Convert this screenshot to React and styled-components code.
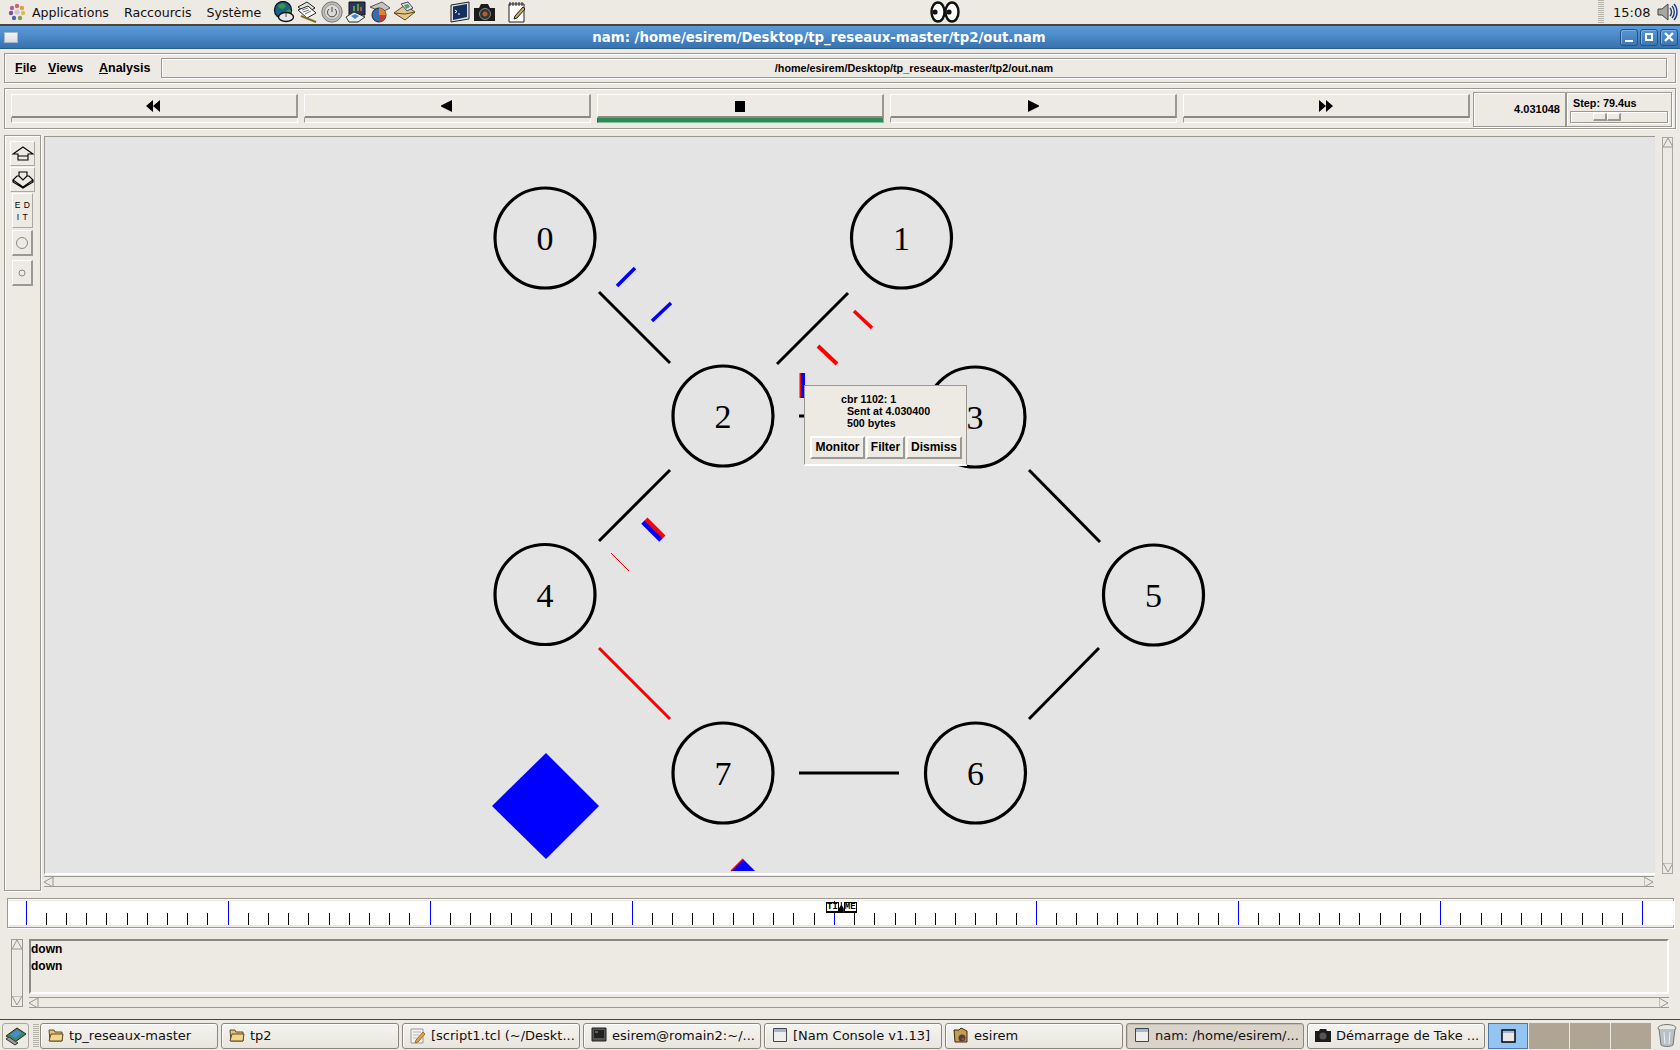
import styled, { createGlobalStyle, css } from "styled-components";

const GlobalStyle = createGlobalStyle`
    html, body {
        margin: 0;
        padding: 0;
        background: #ede9e3;
    }
    * {
        box-sizing: border-box;
    }
`;

const groove = css`
    border: 1px solid #9a9892;
    box-shadow: inset 1px 1px 0 #fff, 1px 1px 0 #fff;
`;

const raised = css`
    background: #ede9e3;
    border-top: 1px solid #fff;
    border-left: 1px solid #fff;
    border-right: 2px solid #9a9892;
    border-bottom: 2px solid #9a9892;
`;

const sans = `"DejaVu Sans", sans-serif`;
const tk = `"Liberation Sans", Arial, sans-serif`;

const NODES = [
    { id: 0, x: 545, y: 238 },
    { id: 1, x: 901.5, y: 238 },
    { id: 2, x: 723, y: 416 },
    { id: 3, x: 975, y: 417 },
    { id: 4, x: 545, y: 594.5 },
    { id: 5, x: 1153.5, y: 595 },
    { id: 6, x: 975.5, y: 773 },
    { id: 7, x: 723, y: 773 },
];

const LINKS = [
    { a: [599, 292], b: [670, 363] },
    { a: [848, 293], b: [777, 364] },
    { a: [670, 470], b: [599, 541] },
    { a: [799, 416], b: [812, 416] },
    { a: [1029, 470], b: [1100, 542] },
    { a: [1099, 648], b: [1029, 719] },
    { a: [799, 773], b: [899, 773] },
    { a: [599, 648], b: [670, 719], color: "#f00" },
];

const PACKETS = [
    { a: [617, 286], b: [635, 268], color: "#00f", w: 3.5 },
    { a: [652, 321], b: [671, 303], color: "#00f", w: 3.5 },
    { a: [854, 311], b: [872, 328], color: "#f00", w: 3.5 },
    { a: [818, 346], b: [837, 364], color: "#f00", w: 4 },
    { a: [643, 522], b: [661, 540], color: "#00f", w: 5 },
    { a: [646, 519], b: [664, 537], color: "#f00", w: 4 },
    { a: [611, 553], b: [629, 571], color: "#f00", w: 1 },
    { a: [800.5, 373], b: [800.5, 398], color: "#f00", w: 2 },
    { a: [803, 373], b: [803, 398], color: "#00f", w: 4 },
];

const TASKS = [
    { label: "tp_reseaux-master", icon: "folder" },
    { label: "tp2", icon: "folder" },
    { label: "[script1.tcl (~/Deskt...", icon: "note" },
    { label: "esirem@romain2:~/...", icon: "term" },
    { label: "[Nam Console v1.13]", icon: "win" },
    { label: "esirem", icon: "home" },
    { label: "nam: /home/esirem/...", icon: "win", active: true },
    { label: "Démarrage de Take ...", icon: "camera" },
];

const TICKS = Array.from({ length: 81 }, (_, i) => i);

const Arrow = ({ kind }) => (
    <svg width="16" height="12" viewBox="0 0 16 12">
        {kind === "rew" && <path d="M7 0v12L0 6zM14 0v12L7 6z" fill="#000" />}
        {kind === "back" && <path d="M13 0v12L2 6.5V5.5z" fill="#000" />}
        {kind === "stop" && <path d="M3 1h10v11H3z" fill="#000" />}
        {kind === "play" && <path d="M3 0v12L14 6.5V5.5z" fill="#000" />}
        {kind === "ff" && <path d="M1 0v12L8 6zM8 0v12L15 6z" fill="#000" />}
    </svg>
);

const Gnome = () => (
    <svg width="18" height="18" viewBox="0 0 18 18">
        <circle cx="9" cy="3" r="2.2" fill="#c66" />
        <circle cx="14" cy="5" r="2.2" fill="#e0a040" />
        <circle cx="15" cy="10" r="2.2" fill="#d8c050" />
        <circle cx="12" cy="15" r="2.2" fill="#80a050" />
        <circle cx="6" cy="15" r="2.2" fill="#5a60b0" />
        <circle cx="3" cy="10" r="2.2" fill="#7a50a0" />
        <circle cx="4" cy="5" r="2.2" fill="#b060a0" />
        <circle cx="9" cy="9" r="2.6" fill="#d0c8d0" />
    </svg>
);

const PanelIcon = ({ kind }) => {
    if (kind === "globe") return (
        <svg width="22" height="22" viewBox="0 0 22 22">
            <circle cx="10" cy="9" r="8.5" fill="#17648a" stroke="#0c1c28" strokeWidth="1.4" />
            <path d="M5 4l5-2 3 3-3 3-4-1zM13 10l4-2 1 3-4 3z" fill="#3a9a3a" />
            <ellipse cx="13" cy="16" rx="7.5" ry="4.5" fill="#e8e8e8" stroke="#111" strokeWidth="1.4" />
            <path d="M13 12v4" stroke="#555" />
        </svg>
    );
    if (kind === "papers") return (
        <svg width="22" height="22" viewBox="0 0 22 22">
            <path d="M1 6l9-5 8 6-9 5z" fill="#e4e4e4" stroke="#222" />
            <path d="M1 9l10-4 8 7-9 5z" fill="#fff" stroke="#222" />
            <path d="M5 9l6-2M6 11l6-2M8 13l6-3" stroke="#777" />
            <path d="M4 15l15 6" stroke="#b08a30" strokeWidth="2.4" />
            <path d="M4 15l15 6" stroke="#333" strokeWidth="0.6" />
        </svg>
    );
    if (kind === "power") return (
        <svg width="22" height="22" viewBox="0 0 22 22">
            <circle cx="11" cy="11" r="10.2" fill="#bdbbb7" stroke="#777" />
            <circle cx="11" cy="11" r="7.5" fill="#dcdad6" stroke="#999" />
            <path d="M8 8a4.5 4.5 0 1 0 6 0M11 6v5" fill="none" stroke="#444" />
        </svg>
    );
    if (kind === "chart") return (
        <svg width="22" height="22" viewBox="0 0 22 22">
            <path d="M4 1h16v13H4z" fill="#2a3560" stroke="#111" />
            <path d="M8 10V5h2v5zM12 10V3h2v7z" fill="#50a050" />
            <path d="M15 10V6h2v4z" fill="#c05040" />
            <path d="M1 16l8-5 11 5-7 5H4z" fill="#eee" stroke="#333" />
            <path d="M6 15l4-2 4 2-4 3z" fill="#3a8ad8" />
        </svg>
    );
    if (kind === "pie") return (
        <svg width="22" height="22" viewBox="0 0 22 22">
            <path d="M1 6l12-5 8 6-8 4z" fill="#c4c4c4" stroke="#555" />
            <circle cx="10" cy="14" r="7" fill="#3a6ab0" stroke="#222" />
            <path d="M10 14V7a7 7 0 0 1 7 7z" fill="#e08030" />
            <path d="M10 14h7a7 7 0 0 1-7 7z" fill="#c04030" />
        </svg>
    );
    if (kind === "mail") return (
        <svg width="23" height="22" viewBox="0 0 23 22">
            <path d="M1 12l11-8 10 7-10 8z" fill="#e2c68c" stroke="#5a4a20" />
            <path d="M8 3l7-2 5 6-6 3z" fill="#dfe8df" stroke="#446" />
            <path d="M11 4l4-1 2 3-4 2z" fill="#5a9a70" />
            <path d="M1 12l11 1 10-2" fill="none" stroke="#5a4a20" />
        </svg>
    );
    if (kind === "term") return (
        <svg width="21" height="22" viewBox="0 0 21 22">
            <path d="M1 4l18-3v17L1 21z" fill="#ddd" stroke="#222" />
            <path d="M3 5.5l14-2.5v13L3 19z" fill="#14305e" />
            <path d="M5 9l2 1.5L5 12M8 13h2" stroke="#fff" fill="none" />
        </svg>
    );
    if (kind === "camera") return (
        <svg width="23" height="20" viewBox="0 0 23 20">
            <path d="M1 6h5l2-4h7l2 4h5v13H1z" fill="#1c1c1c" />
            <circle cx="12" cy="12" r="5.5" fill="#333" stroke="#888" />
            <circle cx="12" cy="12" r="2.5" fill="#b06030" />
        </svg>
    );
    if (kind === "note") return (
        <svg width="20" height="22" viewBox="0 0 20 22">
            <path d="M2 3h15v18H2z" fill="#fff" stroke="#222" />
            <path d="M3 1v4M6 1v4M9 1v4M12 1v4M15 1v4" stroke="#222" />
            <path d="M8 15l8-9 2 2-8 9-3 1z" fill="#c8a850" stroke="#222" />
        </svg>
    );
    return null;
};

const Eyes = () => (
    <svg width="30" height="22" viewBox="0 0 30 22">
        <ellipse cx="8" cy="11" rx="6.5" ry="9.5" fill="#fff" stroke="#111" strokeWidth="2.4" />
        <ellipse cx="22" cy="11" rx="6.5" ry="9.5" fill="#fff" stroke="#111" strokeWidth="2.4" />
        <circle cx="5" cy="11" r="2.6" fill="#111" />
        <circle cx="19" cy="11" r="2.6" fill="#111" />
    </svg>
);

const Speaker = () => (
    <svg width="22" height="20" viewBox="0 0 22 20">
        <path d="M1 7h4l6-5v16l-6-5H1z" fill="#a8a6a0" stroke="#444" />
        <path d="M13 6c2 2 2 6 0 8M15 4c3 3 3 9 0 12M17 2c4 4 4 12 0 16" fill="none" stroke="#1c3f80" strokeWidth="1.4" />
    </svg>
);

const TaskIcon = ({ kind }) => {
    if (kind === "folder") return (
        <svg width="16" height="16" viewBox="0 0 16 16">
            <path d="M1 3h5l1 2h7v9H2z" fill="#e8c070" stroke="#5a4a2a" />
            <path d="M1 14l2-7h12l-1 7z" fill="#f2d48c" stroke="#5a4a2a" />
        </svg>
    );
    if (kind === "note") return (
        <svg width="16" height="17" viewBox="0 0 16 17">
            <path d="M1 2h12v14H1z" fill="#f4f2ee" stroke="#999" />
            <path d="M3 5h8M3 8h6M3 11h4" stroke="#bbb" />
            <path d="M6 13l7-8 2 2-7 8-3 1z" fill="#e0a050" stroke="#a07030" />
        </svg>
    );
    if (kind === "term") return (
        <svg width="16" height="16" viewBox="0 0 16 16">
            <path d="M1 1h14v13H1z" fill="#555" stroke="#222" />
            <path d="M3 3h10v8H3z" fill="#222" />
            <path d="M4 5h3" stroke="#8a8" />
        </svg>
    );
    if (kind === "win") return (
        <svg width="16" height="16" viewBox="0 0 16 16">
            <path d="M1.5 1.5h13v13h-13z" fill="#f0eeea" stroke="#444" />
            <path d="M2 2h12v3H2z" fill="#9db8d8" />
        </svg>
    );
    if (kind === "home") return (
        <svg width="16" height="17" viewBox="0 0 16 17">
            <path d="M1 3h5l2-2 6 3v11H2z" fill="#c89a50" stroke="#3a2a10" />
            <circle cx="9" cy="11" r="3.5" fill="#444" />
            <circle cx="10" cy="12" r="1.5" fill="#c04030" />
        </svg>
    );
    return (
        <svg width="16" height="14" viewBox="0 0 16 14">
            <path d="M0 3h4l1-2h6l1 2h4v11H0z" fill="#1c1c1c" />
            <circle cx="8" cy="8" r="3.5" fill="#555" />
        </svg>
    );
};

const Node = ({ id, x, y }) => (
    <g>
        <circle cx={x} cy={y} r="50" fill="none" stroke="#000" strokeWidth="3.2" />
        <NodeLabel x={x} y={y + 12}>{id}</NodeLabel>
    </g>
);

const ScrollArrow = ({ dir }) => {
    const points = {
        up: "0,9 5,0 10,9",
        down: "0,0 5,9 10,0",
        left: "9,0 0,5 9,10",
        right: "0,0 9,5 0,10",
    };
    return (
        <svg width="10" height="10" viewBox="0 0 10 10">
            <polygon points={points[dir]} fill="#ede9e3" stroke="#9a9892" />
        </svg>
    );
};

const App = () => {
    return <>
        <GlobalStyle />
        <Page>
            <TopPanel>
                <PanelLogo><Gnome /></PanelLogo>
                <PanelMenu>
                    <PanelMenuItem>Applications</PanelMenuItem>
                    <PanelMenuItem>Raccourcis</PanelMenuItem>
                    <PanelMenuItem>Système</PanelMenuItem>
                </PanelMenu>
                <Launchers>
                    {["globe", "papers", "power", "chart", "pie", "mail"].map(k => <PanelIcon key={k} kind={k} />)}
                </Launchers>
                <Launchers $wide>
                    <PanelIcon kind="term" />
                    <PanelIcon kind="camera" />
                    <NoteSlot><PanelIcon kind="note" /></NoteSlot>
                </Launchers>
                <EyesSlot><Eyes /></EyesSlot>
                <PanelHandle />
                <Clock>15:08</Clock>
                <SpeakerSlot><Speaker /></SpeakerSlot>
            </TopPanel>

            <TitleBar>
                <WindowMenuIcon />
                <TitleText>nam: /home/esirem/Desktop/tp_reseaux-master/tp2/out.nam</TitleText>
                <WindowButtons>
                    <WindowButton><svg width="12" height="12" viewBox="0 0 12 12"><path d="M2 9h8v2H2z" fill="#fff" /></svg></WindowButton>
                    <WindowButton><svg width="12" height="12" viewBox="0 0 12 12"><path d="M3 3h6v6H3z" fill="none" stroke="#fff" strokeWidth="2" /></svg></WindowButton>
                    <WindowButton><svg width="12" height="12" viewBox="0 0 12 12"><path d="M2 2l8 8M10 2l-8 8" stroke="#fff" strokeWidth="2.4" /></svg></WindowButton>
                </WindowButtons>
            </TitleBar>

            <MenuFrame>
                <MenuItem $w={33}><u>F</u>ile</MenuItem>
                <MenuItem $w={51}><u>V</u>iews</MenuItem>
                <MenuItem $w={62}><u>A</u>nalysis</MenuItem>
                <FileEntry>/home/esirem/Desktop/tp_reseaux-master/tp2/out.nam</FileEntry>
            </MenuFrame>

            <ToolbarFrame>
                <Transport>
                    {["rew", "back", "stop", "play", "ff"].map(k => (
                        <TransportCell key={k}>
                            <TransportFace><Arrow kind={k} /></TransportFace>
                            <TransportStrip $active={k === "stop"} />
                        </TransportCell>
                    ))}
                </Transport>
                <TimeBox>4.031048</TimeBox>
                <StepBox>
                    <StepLabel>Step: 79.4us</StepLabel>
                    <StepTrough><StepThumb /><StepThumb /></StepTrough>
                </StepBox>
            </ToolbarFrame>

            <Workspace>
                <SidePanel>
                    <ToolWide>
                        <svg width="22" height="18" viewBox="0 0 22 18">
                            <path d="M11 2L21 9h-5v6H6V9H1zM6 11h10" fill="none" stroke="#000" strokeWidth="1.1" />
                        </svg>
                    </ToolWide>
                    <ToolWide>
                        <svg width="22" height="18" viewBox="0 0 22 18">
                            <path d="M7 1h8v4h2l4 4-10 7L1 9l4-4h2zM1 9v2l10 6 10-6V9M7 5l4 4 4-4" fill="none" stroke="#000" strokeWidth="1.1" />
                        </svg>
                    </ToolWide>
                    <EditButton>E D<br />I T</EditButton>
                    <ToolRaised><svg width="14" height="14" viewBox="0 0 14 14"><circle cx="7" cy="7" r="5.5" fill="none" stroke="#8a8882" /></svg></ToolRaised>
                    <ToolRaised><svg width="8" height="8" viewBox="0 0 8 8"><circle cx="4" cy="4" r="3" fill="none" stroke="#8a8882" /></svg></ToolRaised>
                </SidePanel>
                <CanvasColumn>
                    <CanvasRow>
                        <CanvasFrame>
                            <NetworkSvg viewBox="45 137 1610 736">
                                {LINKS.map((l, i) => <line key={i} x1={l.a[0]} y1={l.a[1]} x2={l.b[0]} y2={l.b[1]} stroke={l.color || "#000"} strokeWidth="3" />)}
                                {PACKETS.map((p, i) => <line key={i} x1={p.a[0]} y1={p.a[1]} x2={p.b[0]} y2={p.b[1]} stroke={p.color} strokeWidth={p.w} />)}
                                {NODES.map(n => <Node key={n.id} {...n} />)}
                                <polygon points="546,753 599,806 546,859 492,806" fill="#00f" />
                                <polygon points="743,859 755,871 731,871" fill="#00f" />
                                <line x1="731" y1="871" x2="743" y2="859" stroke="#f00" strokeWidth="1.4" />
                            </NetworkSvg>
                            <PacketPopup>
                                <PopupText>{`cbr 1102: 1\n  Sent at 4.030400\n  500 bytes`}</PopupText>
                                <PopupButtons>
                                    <PopupButton $w={55}>Monitor</PopupButton>
                                    <PopupButton $w={39}>Filter</PopupButton>
                                    <PopupButton $w={56}>Dismiss</PopupButton>
                                </PopupButtons>
                            </PacketPopup>
                        </CanvasFrame>
                        <VScroll>
                            <ScrollArrow dir="up" />
                            <ScrollArrow dir="down" />
                        </VScroll>
                    </CanvasRow>
                    <HScroll>
                        <ScrollArrow dir="left" />
                        <ScrollArrow dir="right" />
                    </HScroll>
                </CanvasColumn>
            </Workspace>

            <TimelineFrame>
                <svg width="1665" height="24" viewBox="9 901 1665 24">
                    {TICKS.map(i => {
                        const x = Math.round(25.5 + i * 20.21) + 0.5;
                        const major = i % 10 === 0;
                        return <line key={i} x1={x} x2={x} y1={major ? 901 : 913} y2="925" stroke={major ? "#00f" : "#000"} />;
                    })}
                </svg>
                <TimeMarker>
                    <TimeLetters>TI</TimeLetters>
                    <TimeThumb />
                    <TimeLetters>ME</TimeLetters>
                </TimeMarker>
            </TimelineFrame>

            <LogRow>
                <LogScroll>
                    <ScrollArrow dir="up" />
                    <ScrollArrow dir="down" />
                </LogScroll>
                <LogColumn>
                    <LogBox>down<br />down</LogBox>
                    <LogHScroll>
                        <ScrollArrow dir="left" />
                        <ScrollArrow dir="right" />
                    </LogHScroll>
                </LogColumn>
            </LogRow>

            <Taskbar>
                <ShowDesktop>
                    <svg width="24" height="22" viewBox="0 0 24 22">
                        <path d="M2 11l11-8 9 6-11 8z" fill="#3a8a60" stroke="#222" />
                        <path d="M6 10l7-5 5 3-7 5z" fill="#4a8ad0" />
                        <path d="M2 14l9 6 3-2-9-6z" fill="#999" stroke="#333" />
                    </svg>
                </ShowDesktop>
                <TaskHandle />
                <TaskList>
                    {TASKS.map(t => (
                        <TaskButton key={t.label} $active={t.active}>
                            <TaskIcon kind={t.icon} />
                            <TaskLabel>{t.label}</TaskLabel>
                        </TaskButton>
                    ))}
                </TaskList>
                <Pager>
                    <PagerCell $active><svg width="15" height="14" viewBox="0 0 15 14"><path d="M1 1h13v12H1z" fill="#e8e8e8" stroke="#000" strokeWidth="1.5" /><path d="M2 2h11v2H2z" fill="#9db8d8" /></svg></PagerCell>
                    <PagerCell />
                    <PagerCell />
                    <PagerCell />
                </Pager>
                <TrashSlot>
                    <svg width="20" height="24" viewBox="0 0 20 24">
                        <ellipse cx="10" cy="5" rx="9" ry="3.5" fill="#e8e8e4" stroke="#777" />
                        <path d="M2 6l2 16c3 2 9 2 12 0l2-16" fill="#b8c2c4" stroke="#777" />
                        <path d="M7 9l1 12M13 9l-1 12" stroke="#eef" />
                    </svg>
                </TrashSlot>
            </Taskbar>
        </Page>
    </>;
}

export default App;

const Page = styled.div`
    width: 1680px;
    height: 1050px;
    overflow: hidden;
    background: #ede9e3;
    display: flex;
    flex-direction: column;
    font-family: ${tk};
    position: relative;
`

const TopPanel = styled.div`
    height: 26px;
    flex: none;
    display: flex;
    align-items: center;
    background: #ede9e3;
    border-bottom: 2px solid #4a463c;
`

const PanelLogo = styled.div`
    width: 32px;
    flex: none;
    padding-left: 8px;
    display: flex;
`

const PanelMenu = styled.div`
    display: flex;
    width: 241px;
    flex: none;
    gap: 15px;
`

const PanelMenuItem = styled.span`
    font: 12.6px ${sans};
    color: #111;
`

const Launchers = styled.div`
    display: flex;
    align-items: center;
    gap: 2px;
    width: ${p => p.$wide ? "471px" : "177px"};
    flex: none;
`

const NoteSlot = styled.div`
    margin-left: 9px;
    display: flex;
`

const EyesSlot = styled.div`
    width: 30px;
    display: flex;
    flex: none;
    margin-left: 9px;
`

const PanelHandle = styled.div`
    width: 6px;
    height: 24px;
    flex: none;
    margin-left: 638px;
    background: repeating-linear-gradient(to bottom, #b5b2aa 0 1px, #ede9e3 1px 2px);
`

const Clock = styled.span`
    font: 13px ${sans};
    color: #111;
    margin-left: 9px;
    width: 44px;
    flex: none;
`

const SpeakerSlot = styled.div`
    display: flex;
    flex: none;
`

const TitleBar = styled.div`
    height: 23px;
    flex: none;
    display: flex;
    align-items: center;
    position: relative;
    padding: 0 2px 0 4px;
    background: linear-gradient(to bottom, #5b9cdc, #3872ad);
    border-bottom: 1px solid #2c5a8c;
`

const WindowMenuIcon = styled.div`
    width: 14px;
    height: 11px;
    background: linear-gradient(to bottom, #f4f4f4, #dcdcdc);
    border: 1px solid #9fb8d0;
`

const TitleText = styled.div`
    position: absolute;
    left: 0;
    right: 42px;
    text-align: center;
    font: bold 13.3px ${sans};
    color: #fff;
`

const WindowButtons = styled.div`
    display: flex;
    gap: 2px;
    margin-left: auto;
`

const WindowButton = styled.div`
    width: 18px;
    height: 17px;
    border: 1px solid #24517f;
    border-radius: 3px;
    box-shadow: inset 1px 1px 0 #7fb0e0;
    display: flex;
    align-items: center;
    justify-content: center;
`

const MenuFrame = styled.div`
    ${groove};
    margin: 4px 4px 0;
    height: 30px;
    flex: none;
    display: flex;
    align-items: center;
    padding: 0 8px 0 10px;
`

const MenuItem = styled.span`
    font: bold 12.5px ${tk};
    color: #000;
    width: ${p => p.$w}px;
    flex: none;
`

const FileEntry = styled.div`
    ${groove};
    flex: 1;
    height: 20px;
    text-align: center;
    font: bold 10.8px/18px ${tk};
    color: #000;
`

const ToolbarFrame = styled.div`
    ${groove};
    margin: 5px 4px 0;
    height: 41px;
    flex: none;
    display: flex;
    align-items: flex-start;
    padding: 3px 3px 0 6px;
`

const Transport = styled.div`
    display: grid;
    grid-template-columns: repeat(5, 287px);
    gap: 6px;
    margin-top: 2px;
    width: 1459px;
    flex: none;
`

const TransportCell = styled.div`
    display: flex;
    flex-direction: column;
    height: 29px;
`

const TransportFace = styled.div`
    height: 24px;
    flex: none;
    background: #ede9e3;
    border-top: 1px solid #fff;
    border-left: 1px solid #fff;
    border-right: 2px solid #9a9892;
    border-bottom: 2px solid #8a8882;
    display: flex;
    align-items: center;
    justify-content: center;
`

const TransportStrip = styled.div`
    height: 5px;
    flex: none;
    border-left: 1px solid ${p => p.$active ? "#555" : "#9a9892"};
    border-bottom: 1px solid ${p => p.$active ? "#7fbf9a" : "#fff"};
    border-right: 1px solid ${p => p.$active ? "#7fbf9a" : "#fff"};
    background: ${p => p.$active ? "#2e8b57" : "transparent"};
`

const TimeBox = styled.div`
    ${groove};
    width: 93px;
    height: 35px;
    flex: none;
    margin-left: 3px;
    text-align: right;
    padding-right: 5px;
    font: bold 11px/33px ${tk};
    color: #000;
`

const StepBox = styled.div`
    ${groove};
    width: 106px;
    height: 35px;
    flex: none;
    padding: 4px 3px 0 3px;
    display: flex;
    flex-direction: column;
`

const StepLabel = styled.div`
    font: bold 10.8px/13px ${tk};
    color: #000;
    padding-left: 3px;
`

const StepTrough = styled.div`
    ${groove};
    height: 12px;
    margin-top: 1px;
    display: flex;
    padding: 1px 0 0 22px;
`

const StepThumb = styled.div`
    ${raised};
    width: 14px;
    height: 8px;
`

const Workspace = styled.div`
    display: flex;
    margin: 6px 0 0 4px;
    height: 756px;
    flex: none;
`

const SidePanel = styled.div`
    ${groove};
    width: 37px;
    height: 756px;
    flex: none;
    display: flex;
    flex-direction: column;
    align-items: center;
    padding-top: 5px;
`

const ToolWide = styled.div`
    width: 25px;
    height: 25px;
    flex: none;
    margin-bottom: 1px;
    background: #ede9e3;
    border: 1px solid #fff;
    border-right-color: #aaa8a2;
    border-bottom-color: #aaa8a2;
    display: flex;
    align-items: center;
    justify-content: center;
`

const EditButton = styled.div`
    width: 21px;
    height: 35px;
    flex: none;
    margin-bottom: 2px;
    border: 1px solid #fff;
    border-right-color: #aaa8a2;
    border-bottom-color: #aaa8a2;
    text-align: center;
    font: 8.5px/12px ${tk};
    letter-spacing: 0.5px;
    color: #000;
    padding-top: 5px;
`

const ToolRaised = styled.div`
    ${raised};
    width: 21px;
    height: 26px;
    flex: none;
    margin-bottom: 4px;
    display: flex;
    align-items: center;
    justify-content: center;
`

const CanvasColumn = styled.div`
    width: 1631px;
    flex: none;
    margin-left: 3px;
    display: flex;
    flex-direction: column;
`

const CanvasRow = styled.div`
    display: flex;
    height: 740px;
    flex: none;
`

const CanvasFrame = styled.div`
    width: 1611px;
    height: 739px;
    margin-top: 1px;
    flex: none;
    position: relative;
    background: #e4e4e4;
    border-top: 1px solid #9a9892;
    border-left: 1px solid #9a9892;
    border-bottom: 2px solid #fff;
`

const NetworkSvg = styled.svg`
    display: block;
    width: 1610px;
    height: 736px;
`

const NodeLabel = styled.text`
    font: 34px "Liberation Serif", serif;
    text-anchor: middle;
    fill: #000;
`

const PacketPopup = styled.div`
    position: absolute;
    left: 759px;
    top: 248px;
    width: 163px;
    height: 80px;
    background: #ede9e3;
    border: 1px solid #fff;
    border-top-color: #9a9892;
    border-left-color: #9a9892;
    border-right-color: #9a9892;
    box-shadow: 0 1px 0 #fff;
`

const PopupText = styled.pre`
    margin: 7px 0 0 36px;
    font: bold 10.7px/12px ${tk};
    color: #000;
`

const PopupButtons = styled.div`
    display: flex;
    gap: 1px;
    margin: 7px 0 0 5px;
`

const PopupButton = styled.div`
    ${raised};
    border-top-width: 2px;
    border-left-width: 2px;
    width: ${p => p.$w}px;
    height: 23px;
    flex: none;
    text-align: center;
    font: bold 12px/18px ${tk};
    color: #000;
`

const VScroll = styled.div`
    width: 11px;
    flex: none;
    margin: 2px 0 0 7px;
    height: 737px;
    border: 1px solid #aaa8a2;
    display: flex;
    flex-direction: column;
    justify-content: space-between;
    align-items: center;
`

const HScroll = styled.div`
    width: 1610px;
    height: 11px;
    margin-top: 1px;
    border-top: 1px solid #9a9892;
    border-bottom: 1px solid #9a9892;
    display: flex;
    justify-content: space-between;
    align-items: center;
    flex: none;
`

const TimelineFrame = styled.div`
    ${groove};
    position: relative;
    margin: 7px 6px 0 7px;
    height: 30px;
    flex: none;
    padding: 2px 0 0 1px;
    background: #ede9e3;
    svg {
        display: block;
        background: #fff;
    }
`

const TimeMarker = styled.div`
    position: absolute;
    left: 818px;
    top: 3px;
    width: 30px;
    height: 11px;
    display: flex;
`

const TimeLetters = styled.span`
    flex: 1;
    background: #fff;
    border: 1px solid #000;
    border-bottom-width: 2px;
    font: bold 9px/8px "Liberation Mono", monospace;
    text-align: center;
    color: #000;
`

const TimeThumb = styled.span`
    width: 5px;
    flex: none;
    height: 11px;
    background: #000;
    clip-path: polygon(40% 0, 60% 0, 60% 30%, 100% 60%, 100% 100%, 0 100%, 0 60%, 40% 30%);
`

const LogRow = styled.div`
    display: flex;
    margin: 11px 11px 0 11px;
    height: 68px;
    flex: none;
    gap: 6px;
`

const LogScroll = styled.div`
    width: 12px;
    height: 68px;
    flex: none;
    border: 1px solid #9a9892;
    display: flex;
    flex-direction: column;
    justify-content: space-between;
    align-items: center;
`

const LogColumn = styled.div`
    flex: 1;
    display: flex;
    flex-direction: column;
    min-width: 0;
`

const LogBox = styled.div`
    height: 55px;
    flex: none;
    border-top: 2px solid #8a8882;
    border-left: 2px solid #8a8882;
    border-right: 2px solid #fff;
    border-bottom: 2px solid #fff;
    font: bold 12px/17px ${tk};
    color: #000;
`

const LogHScroll = styled.div`
    height: 11px;
    margin-top: 3px;
    flex: none;
    border-top: 1px solid #9a9892;
    border-bottom: 1px solid #9a9892;
    display: flex;
    justify-content: space-between;
    align-items: center;
`

const Taskbar = styled.div`
    margin-top: auto;
    height: 31px;
    flex: none;
    display: flex;
    align-items: flex-start;
    border-top: 1px solid #4a463c;
    padding: 3px 0 0 2px;
    background: #ede9e3;
`

const ShowDesktop = styled.div`
    width: 27px;
    height: 26px;
    flex: none;
    border: 1px solid #a9a69c;
    border-radius: 3px;
    display: flex;
    align-items: center;
    justify-content: center;
`

const TaskHandle = styled.div`
    width: 6px;
    height: 24px;
    flex: none;
    margin: 1px 1px 0 4px;
    background: repeating-linear-gradient(to bottom, #b5b2aa 0 1px, #ede9e3 1px 2px);
`

const TaskList = styled.div`
    display: grid;
    grid-template-columns: repeat(8, 178px);
    gap: 3px;
    flex: none;
    width: 1445px;
`

const TaskButton = styled.div`
    height: 26px;
    display: flex;
    align-items: center;
    gap: 5px;
    padding: 0 0 2px 7px;
    border: 1px solid #8a867c;
    border-radius: 3px;
    background: ${p => p.$active ? "#d9d3c9" : "linear-gradient(to bottom, #f6f4f0, #e8e5de)"};
    box-shadow: inset 1px 1px 0 ${p => p.$active ? "#c4beb2" : "#fff"};
`

const TaskLabel = styled.span`
    font: 13px ${sans};
    color: #111;
    white-space: nowrap;
`

const Pager = styled.div`
    display: flex;
    gap: 1px;
    margin-left: 3px;
    flex: none;
`

const PagerCell = styled.div`
    width: 40px;
    height: 26px;
    background: ${p => p.$active ? "#94c4f2" : "#b0a594"};
    border: ${p => p.$active ? "1px solid #4a78a8" : "none"};
    display: flex;
    align-items: center;
    justify-content: center;
`

const TrashSlot = styled.div`
    margin-left: 6px;
    flex: none;
    display: flex;
`
